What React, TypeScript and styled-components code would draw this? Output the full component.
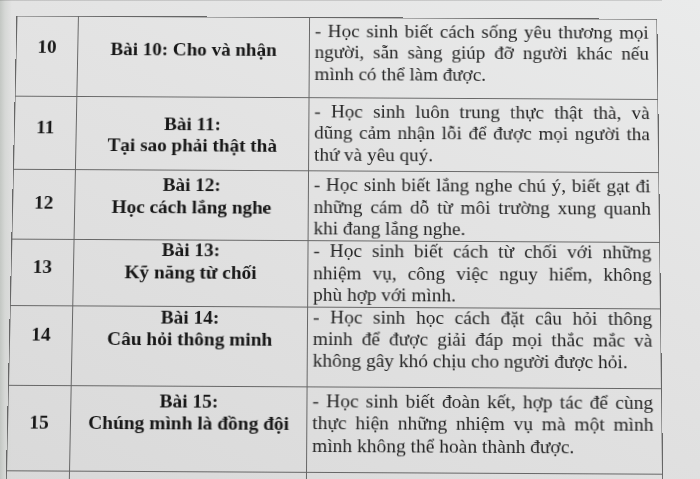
import styled, { createGlobalStyle } from "styled-components";

const GlobalStyle = createGlobalStyle`
  html, body {
    margin: 0;
    padding: 0;
  }

  body {
    font-family: "Liberation Serif", "Times New Roman", serif;
    background:
      linear-gradient(90deg, #c3c7c3 0px, #d6d8d6 5px, rgba(214, 216, 214, 0) 12px),
      linear-gradient(205deg, #eaebeb 0%, #e3e3e3 40%, #d9d9d9 100%);
  }
`;

const Page = styled.div`
  width: 700px;
  height: 479px;
  overflow: hidden;
`;

const PrevEdge = styled.div`
  width: 662px;
  height: 1px;
  background: rgba(80, 80, 80, 0.2);
`;

const Table = styled.div`
  display: flex;
  flex-direction: column;
  box-sizing: border-box;
  width: 657px;
  margin: 4px 0 0 6px;
  border-top: 1px solid #666;
  border-left: 1px solid #666;
  transform-origin: 50% 467px;
  transform: perspective(1000px) rotateX(3.1deg) rotate(0.3deg);
  color: #262626;
  font-size: 19.5px;
  line-height: 1.15;
`;

const Row = styled.div<{ $h: number }>`
  display: grid;
  grid-template-columns: 63px 237px 356px;
  height: ${(p) => p.$h}px;
  flex-shrink: 0;
`;

const Cell = styled.div`
  box-sizing: border-box;
  border-right: 1px solid #666;
  border-bottom: 1px solid #666;
  min-width: 0;
`;

const NumCell = styled(Cell)<{ $top: number }>`
  padding-top: ${(p) => p.$top}px;
  text-align: center;
  font-weight: bold;
  color: #171717;
`;

const TitleCell = styled(Cell)<{ $top: number }>`
  padding-top: ${(p) => p.$top}px;
  text-align: center;
  font-weight: bold;
  color: #171717;
`;

const TitleLine = styled.div`
  display: block;
`;

const DescCell = styled(Cell)`
  padding: 3px 8px 0 5px;
`;

const DescLine = styled.div<{ $last?: boolean }>`
  text-align: ${(p) => (p.$last ? "left" : "justify")};
  text-align-last: ${(p) => (p.$last ? "left" : "justify")};
`;

type Lesson = {
  num: string;
  h: number;
  numTop: number;
  titleTop: number;
  title: string[];
  desc: string[];
};

const lessons: Lesson[] = [
  {
    num: "10",
    h: 84,
    numTop: 21,
    titleTop: 23,
    title: ["Bài 10: Cho và nhận"],
    desc: [
      "- Học sinh biết cách sống yêu thương mọi",
      "người, sẵn sàng giúp đỡ người khác nếu",
      "mình có thể làm được.",
    ],
  },
  {
    num: "11",
    h: 76.4,
    numTop: 21,
    titleTop: 17,
    title: ["Bài 11:", "Tại sao phải thật thà"],
    desc: [
      "- Học sinh luôn trung thực thật thà, và",
      "dũng cảm nhận lỗi để được mọi người tha",
      "thứ và yêu quý.",
    ],
  },
  {
    num: "12",
    h: 68.1,
    numTop: 23,
    titleTop: 4,
    title: ["Bài 12:", "Học cách lắng nghe"],
    desc: [
      "- Học sinh biết lắng nghe chú ý, biết gạt đi",
      "những cám dỗ từ môi trường xung quanh",
      "khi đang lắng nghe.",
    ],
  },
  {
    num: "13",
    h: 67.1,
    numTop: 21,
    titleTop: 3,
    title: ["Bài 13:", "Kỹ năng từ chối"],
    desc: [
      "- Học sinh biết cách từ chối với những",
      "nhiệm vụ, công việc nguy hiểm, không",
      "phù hợp với mình.",
    ],
  },
  {
    num: "14",
    h: 85.3,
    numTop: 22,
    titleTop: 4,
    title: ["Bài 14:", "Câu hỏi thông minh"],
    desc: [
      "- Học sinh học cách đặt câu hỏi thông",
      "minh để được giải đáp mọi thắc mắc và",
      "không gây khó chịu cho người được hỏi.",
    ],
  },
  {
    num: "15",
    h: 86.5,
    numTop: 26,
    titleTop: 4,
    title: ["Bài 15:", "Chúng mình là đồng đội"],
    desc: [
      "- Học sinh biết đoàn kết, hợp tác để cùng",
      "thực hiện những nhiệm vụ mà một mình",
      "mình không thể hoàn thành được.",
    ],
  },
];

const App = () => {
  return (
    <Page>
      <GlobalStyle />
      <PrevEdge />
      <Table>
        {lessons.map((l) => (
          <Row key={l.num} $h={l.h}>
            <NumCell $top={l.numTop}>{l.num}</NumCell>
            <TitleCell $top={l.titleTop}>
              {l.title.map((t) => (
                <TitleLine key={t}>{t}</TitleLine>
              ))}
            </TitleCell>
            <DescCell>
              {l.desc.map((d, i) => (
                <DescLine key={d} $last={i === l.desc.length - 1}>
                  {d}
                </DescLine>
              ))}
            </DescCell>
          </Row>
        ))}
        <Row $h={40}>
          <Cell />
          <Cell />
          <Cell />
        </Row>
      </Table>
    </Page>
  );
};

export default App;
